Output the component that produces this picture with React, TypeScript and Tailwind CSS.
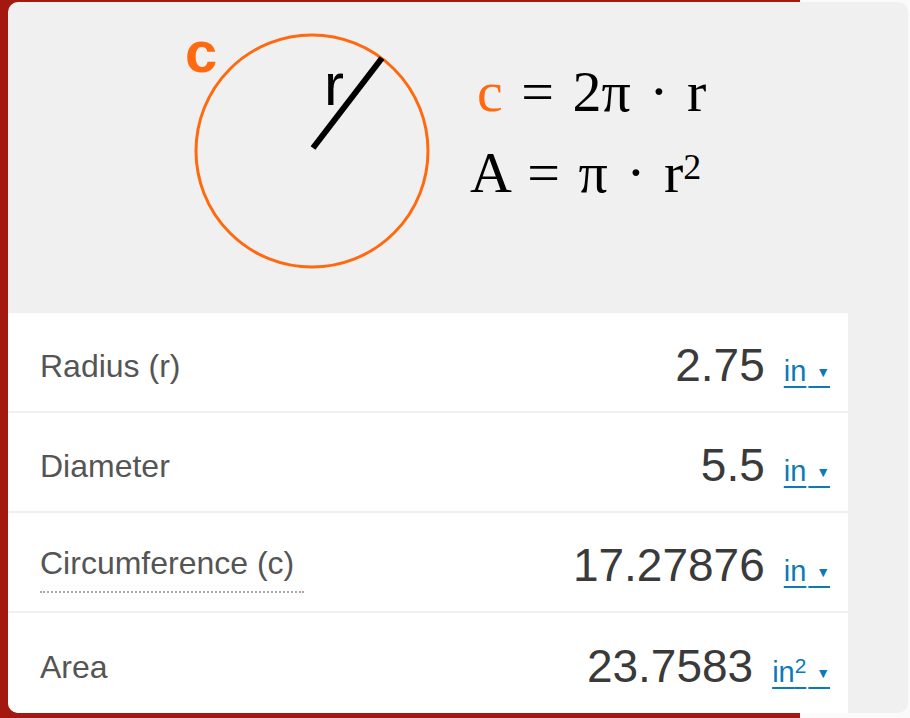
import React from 'react';

type Row = {
  label: string;
  value: string;
  unit: React.ReactNode;
  dotted?: boolean;
};

const rows: Row[] = [
  { label: 'Radius (r)', value: '2.75', unit: 'in' },
  { label: 'Diameter', value: '5.5', unit: 'in' },
  { label: 'Circumference (c)', value: '17.27876', unit: 'in', dotted: true },
  {
    label: 'Area',
    value: '23.7583',
    unit: (
      <>
        in<span className="text-[0.72em] align-[0.45em]">2</span>
      </>
    ),
  },
];

const CircleDiagram: React.FC = () => (
  <svg width="260" height="262" viewBox="0 0 260 262" className="shrink-0">
    <circle cx="134" cy="131" r="116" fill="none" stroke="#ff6a10" strokeWidth="3" />
    <line x1="135" y1="128" x2="204" y2="38" stroke="#000" strokeWidth="6" />
    <text
      x="7"
      y="52"
      fill="#ff6a10"
      fontFamily="Liberation Sans, Arial, sans-serif"
      fontWeight="700"
      fontSize="58"
    >
      c
    </text>
    <text x="146" y="85" fill="#000" fontFamily="Liberation Sans, Arial, sans-serif" fontSize="60">
      r
    </text>
  </svg>
);

export default function App() {
  return (
    <div className="h-[718px] w-[910px] overflow-hidden bg-[linear-gradient(to_right,#a3190f_800px,#fafafa_800px)] pl-2 pt-[2px]">
      <div className="flex h-[711px] w-[900px] flex-col overflow-hidden rounded-[10px] bg-[#f0f0f0]">
        {/* diagram + formulas */}
        <div className="flex h-[311px] shrink-0 items-start">
          <div className="ml-[170px] mt-[18px]">
            <CircleDiagram />
          </div>
          <div className="ml-[32px] mt-[49px] font-['Liberation_Serif',serif] text-[58px] leading-[81px] text-black [word-spacing:4px]">
            <div className="pl-[7px]">
              <span className="text-[#ff6a10]">c</span> = 2π · r
            </div>
            <div>
              A = π · r<span className="text-[0.62em] leading-none align-[13px]">2</span>
            </div>
          </div>
        </div>

        {/* values table */}
        <div className="flex w-[840px] flex-1 flex-col divide-y-2 divide-[#efefef] rounded-bl-[10px] bg-white font-['Liberation_Sans',Arial,sans-serif]">
          {rows.map((row) => (
            <div key={row.label} className="flex h-[100px] items-center justify-between pl-8 pr-[18px] pt-[7px]">
              <span
                className={
                  row.dotted
                    ? 'border-b-2 border-dotted border-[#a8a8a8] pb-[4px] pr-[10px] text-[32px] text-[#555]'
                    : 'text-[32px] text-[#555]'
                }
              >
                {row.label}
              </span>
              <div className="flex items-baseline">
                <span className="text-[46px] text-[#3a3a3a]">{row.value}</span>
                <span className="ml-[19px] text-[29px] text-[#0b7ab5] underline decoration-2 underline-offset-[5px]">
                  {row.unit}
                  <span className="pl-[2px] text-[14px] align-[4px]">{'\u00a0\u00a0▼'}</span>
                </span>
              </div>
            </div>
          ))}
        </div>
      </div>
    </div>
  );
}
